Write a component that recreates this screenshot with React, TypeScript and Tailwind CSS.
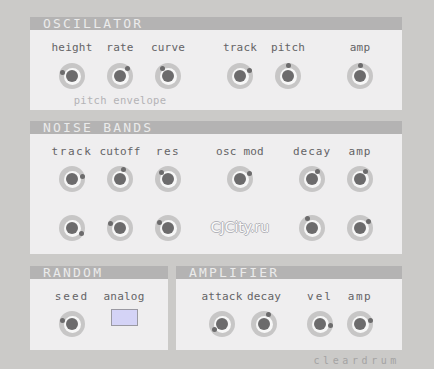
import React from 'react';

type KnobSpec = { label?: string; dx: number; dy: number; track?: string };

const mono = "font-['DejaVu_Sans_Mono',monospace]";

const Knob: React.FC<{ dx: number; dy: number }> = ({ dx, dy }) => (
  <div className="relative w-[26px] h-[26px] rounded-full bg-[#c7c6c6] flex items-center justify-center">
    <div className="w-[17px] h-[17px] rounded-full bg-[#f7f7f7] flex items-center justify-center">
      <div className="w-[12px] h-[12px] rounded-full bg-[#6c6b6c]" />
    </div>
    {/* pointer dot, offset from the knob centre */}
    <div
      className="absolute w-[5px] h-[5px] rounded-full bg-[#6c6b6c]"
      style={{ left: 13 + dx - 2.5, top: 13 + dy - 2.5 }}
    />
  </div>
);

const Label: React.FC<{ text: string; track?: string }> = ({ text, track }) => (
  <div className={`${mono} text-[11px] leading-[12px] text-[#646366] whitespace-nowrap ${track ?? 'tracking-[0.2px]'}`}>
    {text}
  </div>
);

const Header: React.FC<{ title: string }> = ({ title }) => (
  <div className="h-[13px] bg-[#b4b3b3] pl-[13px] flex items-center overflow-hidden">
    <span className={`${mono} text-[13px] leading-[13px] tracking-[2.2px] text-[#ebebeb]`}>{title}</span>
  </div>
);

// a column 48px wide, its centre is where the knob sits
const Col: React.FC<{ children?: React.ReactNode; w?: string }> = ({ children, w }) => (
  <div className={`${w ?? 'w-12'} flex flex-col items-center`}>{children}</div>
);

const oscTop: KnobSpec[] = [
  { label: 'height', dx: -10, dy: -4 },
  { label: 'rate', dx: 7, dy: -8 },
  { label: 'curve', dx: -6, dy: -8 },
];

const noiseRow1: KnobSpec[] = [
  { label: 'track', dx: 10, dy: -3, track: 'tracking-[1.6px]' },
  { label: 'cutoff', dx: 3, dy: -10 },
  { label: 'res', dx: -7, dy: -7, track: 'tracking-[1.6px]' },
];
const noiseRow2: KnobSpec[] = [
  { dx: 9, dy: 5 },
  { dx: -10, dy: -5 },
  { dx: -9, dy: -6 },
];

const App: React.FC = () => {
  return (
    <div className="w-[434px] h-[369px] bg-[#cbcac8] pt-[17px] pl-[30px] overflow-hidden">
      <div className="w-[372px] flex flex-col">
        {/* OSCILLATOR */}
        <Header title="OSCILLATOR" />
        <div className="h-[80px] bg-[#efeeef] pt-[12px] pl-[18px]">
          <div className="flex">
            {oscTop.map((k) => (
              <Col key={k.label}>
                <Label text={k.label!} />
                <div className="mt-[9px]"><Knob dx={k.dx} dy={k.dy} /></div>
              </Col>
            ))}
            <div className="w-6" />
            <Col>
              <Label text="track" />
              <div className="mt-[9px]"><Knob dx={9} dy={-6} /></div>
            </Col>
            <Col>
              <Label text="pitch" />
              <div className="mt-[9px]"><Knob dx={0} dy={-11} /></div>
            </Col>
            <div className="w-6" />
            <Col>
              <Label text="amp" />
              <div className="mt-[9px]"><Knob dx={0} dy={-11} /></div>
            </Col>
          </div>
          <div className="w-[144px] flex justify-center mt-[5px]">
            <span className={`${mono} text-[10.5px] leading-[12px] tracking-[0.3px] text-[#b4b3b6]`}>pitch envelope</span>
          </div>
        </div>

        {/* NOISE BANDS */}
        <div className="mt-[11px]">
          <Header title="NOISE BANDS" />
        </div>
        <div className="h-[120px] bg-[#efeeef] pt-[12px] pl-[18px]">
          <div className="flex">
            {noiseRow1.map((k, i) => (
              <Col key={i}>
                <Label text={k.label!} track={k.track} />
                <div className="mt-[8px]"><Knob dx={k.dx} dy={k.dy} /></div>
                <div className="mt-[23px]"><Knob dx={noiseRow2[i].dx} dy={noiseRow2[i].dy} /></div>
              </Col>
            ))}
            <div className="w-6" />
            <Col>
              <Label text="osc mod" />
              <div className="mt-[8px]"><Knob dx={9} dy={-6} /></div>
              <div className="mt-[26px] font-['DejaVu_Sans',sans-serif] text-[14px] leading-[18px] text-[#fbfbfb] whitespace-nowrap [text-shadow:1px_0_0_#b4b4ba,-1px_0_0_#b4b4ba,0_1px_0_#b4b4ba,0_-1px_0_#b4b4ba]">
                CJCity.ru
              </div>
            </Col>
            <div className="w-6" />
            <Col>
              <Label text="decay" track="tracking-[1px]" />
              <div className="mt-[8px]"><Knob dx={5} dy={-8} /></div>
              <div className="mt-[23px]"><Knob dx={-5} dy={-10} /></div>
            </Col>
            <Col>
              <Label text="amp" track="tracking-[1px]" />
              <div className="mt-[8px]"><Knob dx={5} dy={-8} /></div>
              <div className="mt-[23px]"><Knob dx={8} dy={-7} /></div>
            </Col>
          </div>
        </div>

        {/* RANDOM + AMPLIFIER */}
        <div className="mt-[12px] flex gap-[8px]">
          <div className="w-[138px] flex flex-col">
            <Header title="RANDOM" />
            <div className="h-[71px] bg-[#efeeef] pt-[12px] pl-[18px] flex">
              <Col>
                <Label text="seed" track="tracking-[2px]" />
                <div className="mt-[8px]"><Knob dx={-10} dy={-4} /></div>
              </Col>
              <Col w="w-[56px]">
                <Label text="analog" />
                <div className="mt-[6px] w-[27px] h-[17px] bg-[#d4d3f6] border border-[#9a99a2]" />
              </Col>
            </div>
          </div>
          <div className="w-[226px] flex flex-col">
            <Header title="AMPLIFIER" />
            <div className="h-[71px] bg-[#efeeef] pt-[12px] pl-[26px] flex">
              <Col w="w-[40px]">
                <Label text="attack" />
                <div className="mt-[8px]"><Knob dx={-8} dy={5} /></div>
              </Col>
              <Col w="w-[44px]">
                <Label text="decay" />
                <div className="mt-[8px]"><Knob dx={4} dy={-10} /></div>
              </Col>
              <div className="w-[12px]" />
              <Col w="w-[44px]">
                <Label text="vel" track="tracking-[2px]" />
                <div className="mt-[8px]"><Knob dx={10} dy={1} /></div>
              </Col>
              <Col w="w-[36px]">
                <Label text="amp" track="tracking-[1.5px]" />
                <div className="mt-[8px]"><Knob dx={10} dy={-4} /></div>
              </Col>
            </div>
          </div>
        </div>

        <div className="flex justify-end mt-[5px] pr-[2px]">
          <span className={`${mono} text-[10px] leading-[12px] tracking-[3.6px] text-[#a4a3a3]`}>cleardrum</span>
        </div>
      </div>
    </div>
  );
};

export default App;
